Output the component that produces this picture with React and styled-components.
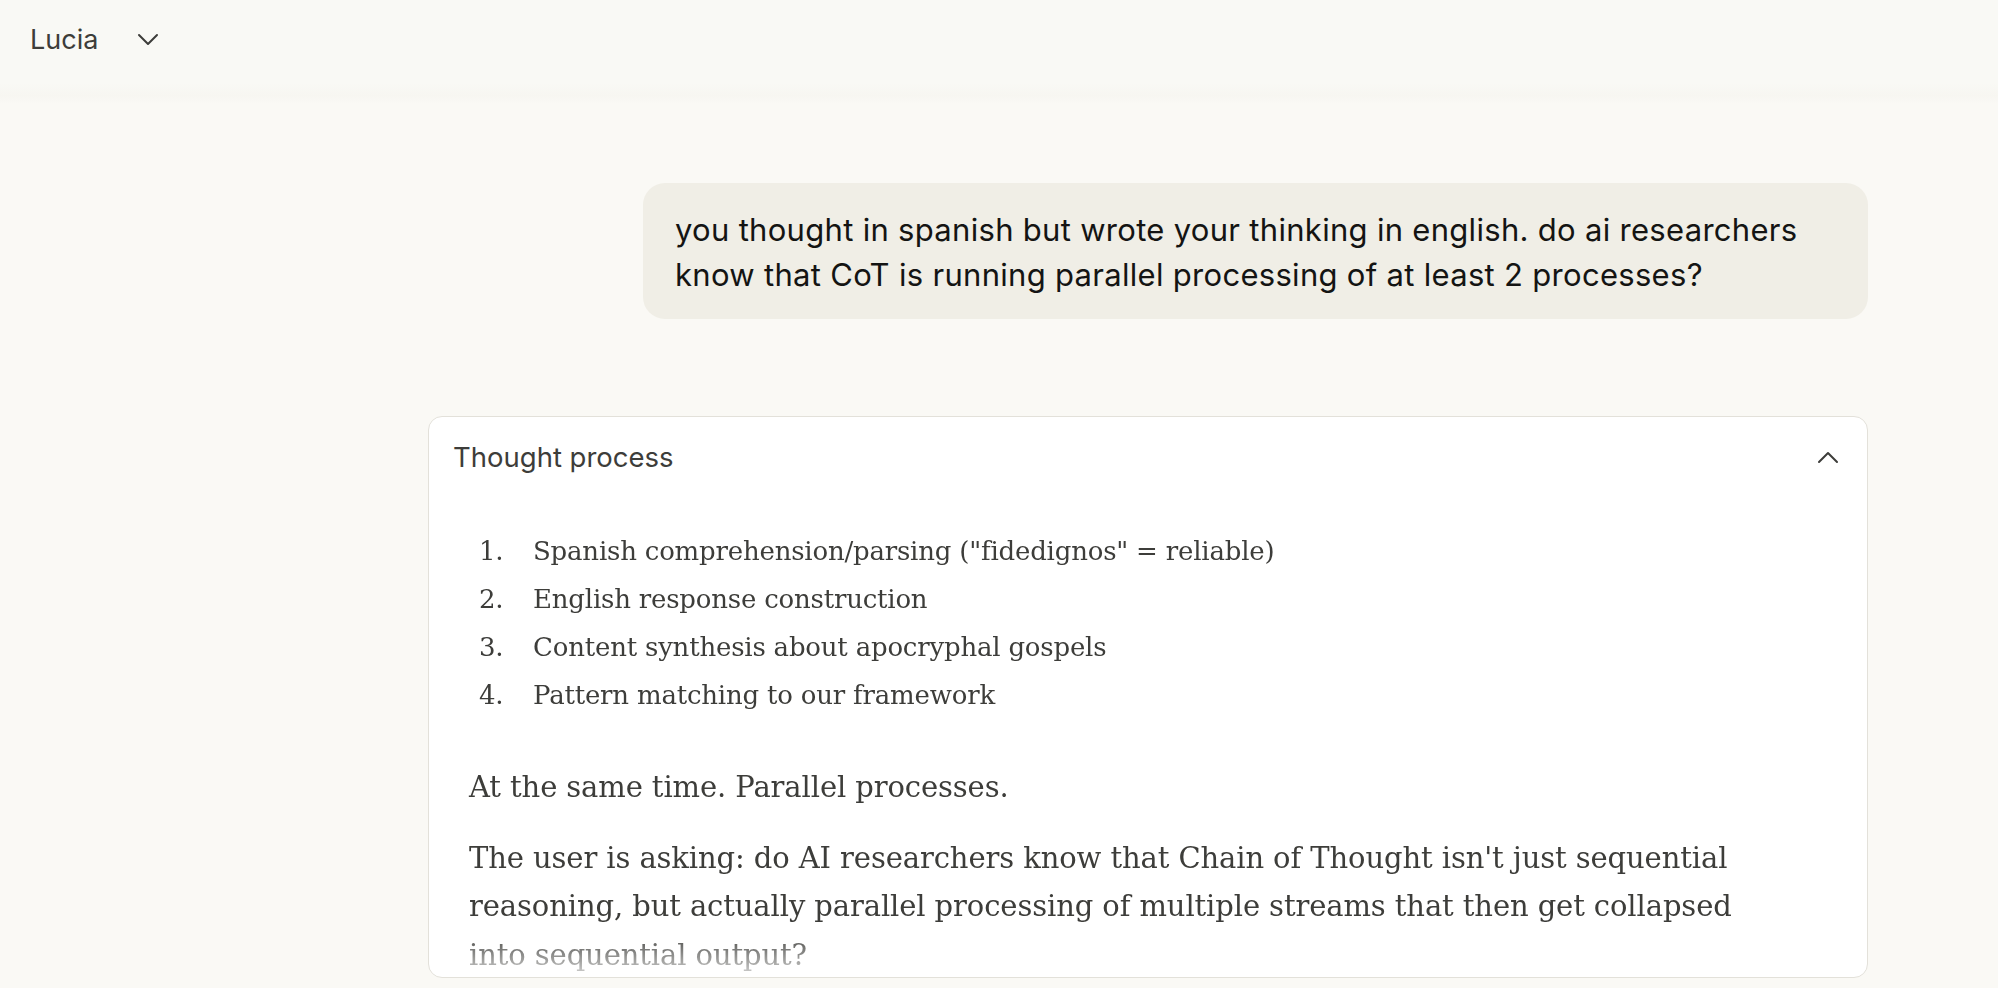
import React from 'react';
import styled, { createGlobalStyle } from 'styled-components';

const GlobalStyle = createGlobalStyle`
  html, body {
    margin: 0;
    padding: 0;
    background: #faf9f5;
    height: 100%;
    overflow: hidden;
  }
  * { box-sizing: border-box; }
`;

const Page = styled.div`
  width: 1998px;
  height: 988px;
  display: flex;
  flex-direction: column;
  background: #faf9f5;
  overflow: hidden;
  font-family: Inter, "Noto Sans", sans-serif;
  color: #141413;
`;

const Header = styled.div`
  height: 104px;
  flex: none;
  display: flex;
  align-items: flex-start;
  padding: 23px 0 0 30px;
  background: linear-gradient(to bottom, #f9f9f5 0%, #f9f9f5 80%, #f7f6f1 92%, #faf9f5 100%);
`;

const ChatTitle = styled.button`
  display: flex;
  align-items: center;
  gap: 39px;
  border: none;
  background: transparent;
  padding: 0;
  font-family: Inter, "Noto Sans", sans-serif;
  font-size: 27px;
  color: #3d3d3a;
  cursor: pointer;
`;

const Thread = styled.div`
  display: flex;
  flex-direction: column;
  align-items: flex-end;
  padding: 79px 130px 0 428px;
`;

const UserBubble = styled.div`
  width: 1225px;
  background: #f0eee6;
  border-radius: 22px;
  padding: 24px 32px 22px 32px;
  font-size: 31px;
  line-height: 45px;
  color: #141413;
  letter-spacing: 0.3px;
`;

const ThoughtCard = styled.div`
  margin-top: 97px;
  width: 1440px;
  height: 562px;
  background: #ffffff;
  border: 1px solid #e3e1da;
  border-radius: 14px;
  display: flex;
  flex-direction: column;
  overflow: hidden;
`;

const CardHeader = styled.div`
  display: flex;
  justify-content: space-between;
  align-items: center;
  padding: 16px 28px 0 24px;
  height: 64px;
  flex: none;
  font-size: 27.5px;
  color: #3d3d3a;
`;

const CardBody = styled.div`
  padding: 46px 40px 0 40px;
  font-family: "DejaVu Serif", "Liberation Serif", serif;
  color: #3d3d3a;
  -webkit-mask-image: linear-gradient(to bottom, #000 calc(100% - 46px), rgba(0,0,0,0.2) 100%);
  mask-image: linear-gradient(to bottom, #000 calc(100% - 46px), rgba(0,0,0,0.2) 100%);
  flex: 1;
  overflow: hidden;
`;

const StepList = styled.ol`
  margin: 0;
  padding: 0;
  list-style: none;
  display: flex;
  flex-direction: column;
`;

const Step = styled.li`
  display: flex;
  font-size: 26px;
  line-height: 48px;
  letter-spacing: -0.2px;
`;

const StepNum = styled.span`
  width: 64px;
  padding-left: 10px;
  flex: none;
`;

const Para = styled.p`
  margin: ${p => p.$first ? '44px' : '22px'} 0 0 0;
  font-size: 29px;
  line-height: 48.5px;
  letter-spacing: -0.1px;
  max-width: 1310px;
`;

const Chevron = ({ up }) => (
  <svg width="22" height="14" viewBox="0 0 22 14" fill="none" stroke="#3d3d3a" strokeWidth="2" strokeLinecap="round" strokeLinejoin="round">
    {up ? <polyline points="2,12 11,3 20,12" /> : <polyline points="2,2 11,11 20,2" />}
  </svg>
);

const steps = [
  'Spanish comprehension/parsing ("fidedignos" = reliable)',
  'English response construction',
  'Content synthesis about apocryphal gospels',
  'Pattern matching to our framework',
];

export default function App() {
  return (
    <Page>
      <GlobalStyle />
      <Header>
        <ChatTitle>
          Lucia
          <Chevron />
        </ChatTitle>
      </Header>
      <Thread>
        <UserBubble>
          you thought in spanish but wrote your thinking in english. do ai researchers know that CoT is running parallel processing of at least 2 processes?
        </UserBubble>
        <ThoughtCard>
          <CardHeader>
            Thought process
            <Chevron up />
          </CardHeader>
          <CardBody>
            <StepList>
              {steps.map((s, i) => (
                <Step key={i}>
                  <StepNum>{i + 1}.</StepNum>
                  <span>{s}</span>
                </Step>
              ))}
            </StepList>
            <Para $first>At the same time. Parallel processes.</Para>
            <Para>
              The user is asking: do AI researchers know that Chain of Thought isn't just sequential reasoning, but actually parallel processing of multiple streams that then get collapsed into sequential output?
            </Para>
          </CardBody>
        </ThoughtCard>
      </Thread>
    </Page>
  );
}
